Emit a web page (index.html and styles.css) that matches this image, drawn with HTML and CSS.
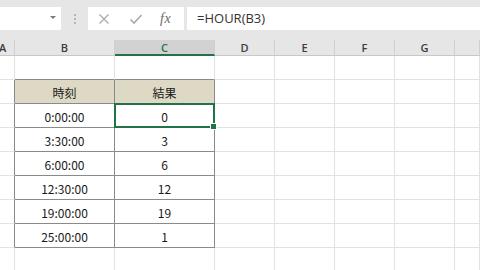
FILE: index.html
```html
<!DOCTYPE html>
<html lang="ja">
<head>
  <meta charset="UTF-8">
  <meta name="viewport" content="width=device-width, initial-scale=1.0">
  <title>HOUR</title>
  <link rel="stylesheet" href="styles.css">
</head>
<body>
  <div class="toolbar">
    <div class="namebox"><span class="arrow"></span></div>
    <div class="grip"><span></span><span></span><span></span></div>
    <div class="buttons">
      <svg class="ico" width="12" height="12" viewBox="0 0 12 12"><path d="M1.5 1.5 L10.5 10.5 M10.5 1.5 L1.5 10.5" stroke="#a8a8a8" stroke-width="1.2" fill="none"/></svg>
      <svg class="ico" width="14" height="12" viewBox="0 0 14 12"><path d="M1.5 6.5 L5 10 L12.5 2" stroke="#a8a8a8" stroke-width="1.6" fill="none"/></svg>
      <span class="fx">fx</span>
    </div>
    <div class="formula">=HOUR(B3)</div>
  </div>

  <div class="sheet">
    <div class="hd hd-a">A</div>
    <div class="hd">B</div>
    <div class="hd hd-on">C</div>
    <div class="hd">D</div>
    <div class="hd">E</div>
    <div class="hd">F</div>
    <div class="hd">G</div>
    <div class="hd"></div>

    <!-- row 1 -->
    <div class="c"></div><div class="c edge-b"></div><div class="c edge-b"></div><div class="c"></div><div class="c"></div><div class="c"></div><div class="c"></div><div class="c"></div>
    <!-- row 2 -->
    <div class="c edge-r"></div><div class="c t th">時刻</div><div class="c t th">結果</div><div class="c"></div><div class="c"></div><div class="c"></div><div class="c"></div><div class="c"></div>
    <!-- row 3 -->
    <div class="c edge-r"></div><div class="c t">0:00:00</div><div class="c t sel">0</div><div class="c"></div><div class="c"></div><div class="c"></div><div class="c"></div><div class="c"></div>
    <!-- row 4 -->
    <div class="c edge-r"></div><div class="c t">3:30:00</div><div class="c t">3</div><div class="c"></div><div class="c"></div><div class="c"></div><div class="c"></div><div class="c"></div>
    <!-- row 5 -->
    <div class="c edge-r"></div><div class="c t">6:00:00</div><div class="c t">6</div><div class="c"></div><div class="c"></div><div class="c"></div><div class="c"></div><div class="c"></div>
    <!-- row 6 -->
    <div class="c edge-r"></div><div class="c t">12:30:00</div><div class="c t">12</div><div class="c"></div><div class="c"></div><div class="c"></div><div class="c"></div><div class="c"></div>
    <!-- row 7 -->
    <div class="c edge-r"></div><div class="c t">19:00:00</div><div class="c t">19</div><div class="c"></div><div class="c"></div><div class="c"></div><div class="c"></div><div class="c"></div>
    <!-- row 8 -->
    <div class="c edge-r"></div><div class="c t">25:00:00</div><div class="c t">1</div><div class="c"></div><div class="c"></div><div class="c"></div><div class="c"></div><div class="c"></div>
    <!-- row 9 -->
    <div class="c"></div><div class="c"></div><div class="c"></div><div class="c"></div><div class="c"></div><div class="c"></div><div class="c"></div><div class="c"></div>
  </div>
</body>
</html>
```

FILE: styles.css
```css
* {
  box-sizing: border-box;
}
body {
  margin: 0;
  width: 480px;
  height: 270px;
  overflow: hidden;
  background-color: #ffffff;
  font-family: "Noto Sans CJK JP", "Liberation Sans", sans-serif;
}
.toolbar {
  display: flex;
  height: 40px;
  padding-top: 7px;
  padding-bottom: 10px;
  background-color: #e6e6e6;
}
.namebox {
  width: 61px;
  background-color: #ffffff;
  position: relative;
}
.arrow {
  position: absolute;
  left: 50px;
  top: 9px;
  border-left: 3px solid transparent;
  border-right: 3px solid transparent;
  border-top: 3px solid #7a7a7a;
}
.grip {
  width: 27px;
  display: flex;
  flex-direction: column;
  align-items: center;
  justify-content: center;
  gap: 2px;
}
.grip span {
  width: 2px;
  height: 2px;
  background-color: #b4b4b4;
}
.buttons {
  width: 96px;
  background-color: #ffffff;
  display: flex;
  align-items: center;
  padding-left: 10px;
}
.buttons .ico:first-child {
  margin-right: 19px;
}
.buttons .ico {
  margin-right: 17px;
}
.fx {
  font-family: "Liberation Serif", serif;
  font-style: italic;
  font-size: 14px;
  color: #6a6a6a;
  letter-spacing: 0.5px;
}
.formula {
  flex: 1;
  margin-left: 3px;
  background-color: #ffffff;
  padding-left: 10px;
  font-family: "Open Sans", "Liberation Sans", sans-serif;
  font-size: 13px;
  line-height: 23px;
  color: #333333;
}
.sheet {
  display: grid;
  grid-template-columns: 15px 100px 100px 60px 60px 60px 60px 1fr;
  grid-template-rows: 16px repeat(9, 24px);
}
.hd {
  background-color: #e6e6e6;
  border-right: 1px solid #d0d0d0;
  border-bottom: 1px solid #c8c8c8;
  font-family: "Open Sans", "Liberation Sans", sans-serif;
  font-size: 11px;
  font-weight: 600;
  line-height: 15px;
  text-align: center;
  color: #3c3c3c;
}
.hd-a {
  text-align: left;
  text-indent: -1px;
}
.hd-on {
  background-color: #d2d2d2;
  border-bottom: 2px solid #217346;
  color: #217346;
}
.c {
  border-right: 1px solid #e2e2e2;
  border-bottom: 1px solid #e2e2e2;
  font-size: 12px;
  color: #1a1a1a;
  text-align: center;
  line-height: 23px;
  padding-top: 1px;
}
.edge-b {
  border-bottom-color: #8a8a8a;
}
.edge-r {
  border-right-color: #8a8a8a;
}
.t {
  border-right-color: #8a8a8a;
  border-bottom-color: #8a8a8a;
}
.th {
  background-color: #ddd9c4;
}
.sel {
  position: relative;
}
.sel::after {
  content: "";
  position: absolute;
  left: -1px;
  top: -1px;
  right: -1px;
  bottom: -1px;
  border: 2px solid #217346;
}
.sel::before {
  content: "";
  position: absolute;
  right: -3px;
  bottom: -3px;
  width: 5px;
  height: 5px;
  background-color: #217346;
  border: 1px solid #ffffff;
  z-index: 1;
}
```
